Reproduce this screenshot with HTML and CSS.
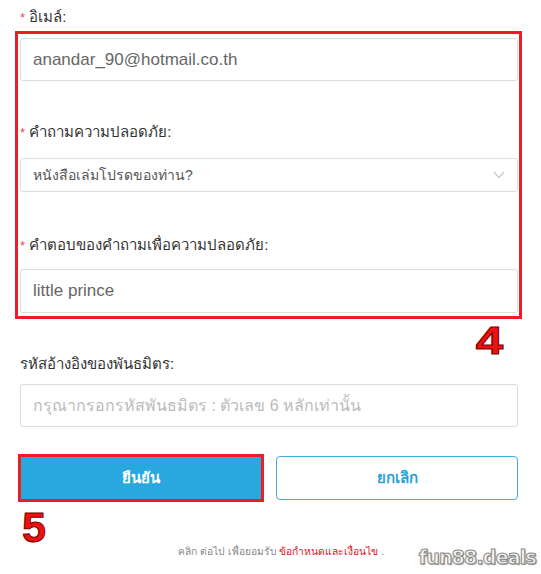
FILE: index.html
```html
<!DOCTYPE html>
<html>
<head lang="th">
    <meta charset="UTF-8">
    <title>ลงทะเบียน</title>
    <link rel="stylesheet" href="styles.css">
</head>
<body>
<div class="page">
    <form class="reg-form">
        <label class="field-label"><span class="req">*</span> อิเมล์:</label>
        <div class="mark-box">
            <input type="text" class="text-input" value="anandar_90@hotmail.co.th">
            <label class="field-label label-question"><span class="req">*</span> คำถามความปลอดภัย:</label>
            <div class="select-input">
                <span>หนังสือเล่มโปรดของท่าน?</span>
                <svg class="chevron" width="12" height="8" viewBox="0 0 12 8"><path d="M1 1l5 5.5L11 1" fill="none" stroke="#c8c8c8" stroke-width="1.2"/></svg>
            </div>
            <label class="field-label label-answer"><span class="req">*</span> คำตอบของคำถามเพื่อความปลอดภัย:</label>
            <input type="text" class="text-input input-answer" value="little prince">
            <span class="step-num step-4">4</span>
        </div>
        <label class="field-label label-ref">รหัสอ้างอิงของพันธมิตร:</label>
        <input type="text" class="text-input input-ref" placeholder="กรุณากรอกรหัสพันธมิตร : ตัวเลข 6 หลักเท่านั้น">
        <div class="btn-row">
            <div class="btn-wrap">
                <a href="javascript:void(0);" class="btn btn-ok">ยืนยัน</a>
                <span class="step-num step-5">5</span>
            </div>
            <a href="javascript:void(0);" class="btn btn-cancel">ยกเลิก</a>
        </div>
        <p class="terms">คลิก ต่อไป เพื่อยอมรับ <a href="javascript:void(0);">ข้อกำหนดและเงื่อนไข</a> .</p>
    </form>
    <div class="watermark">fun88.deals</div>
</div>
</body>
</html>
```

FILE: styles.css
```css
body {
    margin: 0px;
    background: #ffffff;
    font-family: Tahoma, "Liberation Sans", "Noto Sans", sans-serif;
    color: #333333;
}
.page {
    position: relative;
    width: 541px;
    height: 574px;
    overflow: hidden;
}
.reg-form {
    width: 498px;
    margin-left: 20px;
    padding-top: 7px;
}
.field-label {
    display: block;
    font-size: 15px;
    line-height: 20px;
    height: 20px;
    color: #333333;
}
.req {
    color: #e84a5f;
    font-size: 13px;
}
.mark-box {
    position: relative;
    border: 3px solid #ee1c25;
    margin: 4px -4px 0px -5px;
    padding: 4px 1px 3px 2px;
}
.text-input {
    display: block;
    box-sizing: border-box;
    width: 498px;
    height: 43px;
    margin: 0px;
    border: #dcdcdc 1px solid;
    border-radius: 3px;
    padding: 0px 12px;
    font-family: "Liberation Sans", sans-serif;
    font-size: 17px;
    color: #666666;
    outline: none;
}
.text-input::placeholder {
    color: #bbbbbb;
    font-family: Tahoma, "Liberation Sans", sans-serif;
    font-size: 16px;
}
.label-question {
    margin-top: 41px;
}
.select-input {
    box-sizing: border-box;
    width: 498px;
    height: 34px;
    margin-top: 16px;
    border: #dcdcdc 1px solid;
    border-radius: 3px;
    padding: 0px 12px 0px 12px;
    display: flex;
    align-items: center;
    justify-content: space-between;
    font-size: 14px;
    color: #555555;
}
.label-answer {
    margin-top: 43px;
}
.input-answer {
    margin-top: 14px;
    height: 44px;
}
.label-ref {
    margin-top: 35px;
}
.input-ref {
    margin-top: 10px;
}
.step-num {
    position: absolute;
    font-family: "Liberation Sans", sans-serif;
    font-weight: bold;
    color: #ee1111;
    -webkit-text-stroke: 1px #7a0000;
    line-height: 1;
}
.step-4 {
    right: 19px;
    bottom: -44px;
    font-size: 38px;
    transform: scaleX(1.3);
}
.step-5 {
    left: 2px;
    top: 50px;
    font-size: 43px;
}
.btn-row {
    display: flex;
    justify-content: space-between;
    margin-top: 29px;
}
.btn-wrap {
    position: relative;
}
.btn {
    display: block;
    box-sizing: border-box;
    width: 242px;
    height: 44px;
    line-height: 42px;
    border-radius: 4px;
    text-align: center;
    text-decoration: none;
    font-size: 15px;
    font-weight: bold;
}
.btn-ok {
    background: #29a8e0;
    border: 1px solid #29a8e0;
    color: #ffffff;
    outline: 3px solid #ee1c25;
    outline-offset: -1px;
    border-radius: 0px;
}
.btn-cancel {
    border: 1px solid #45a9d9;
    color: #2f9fd6;
    background: #ffffff;
}
.terms {
    margin: 44px 0px 0px 0px;
    padding-left: 24px;
    text-align: center;
    font-size: 10.3px;
    line-height: 16px;
    color: #888888;
}
.terms a {
    color: #e0101a;
    text-decoration: none;
}
.watermark {
    position: absolute;
    right: 5px;
    bottom: 6px;
    font-family: "DejaVu Sans", sans-serif;
    font-size: 19px;
    font-weight: bold;
    letter-spacing: -0.8px;
    color: #f4f4f4;
    -webkit-text-stroke: 1px #8a8a8a;
    text-shadow: 1px 1px 1px #999999;
}
```
